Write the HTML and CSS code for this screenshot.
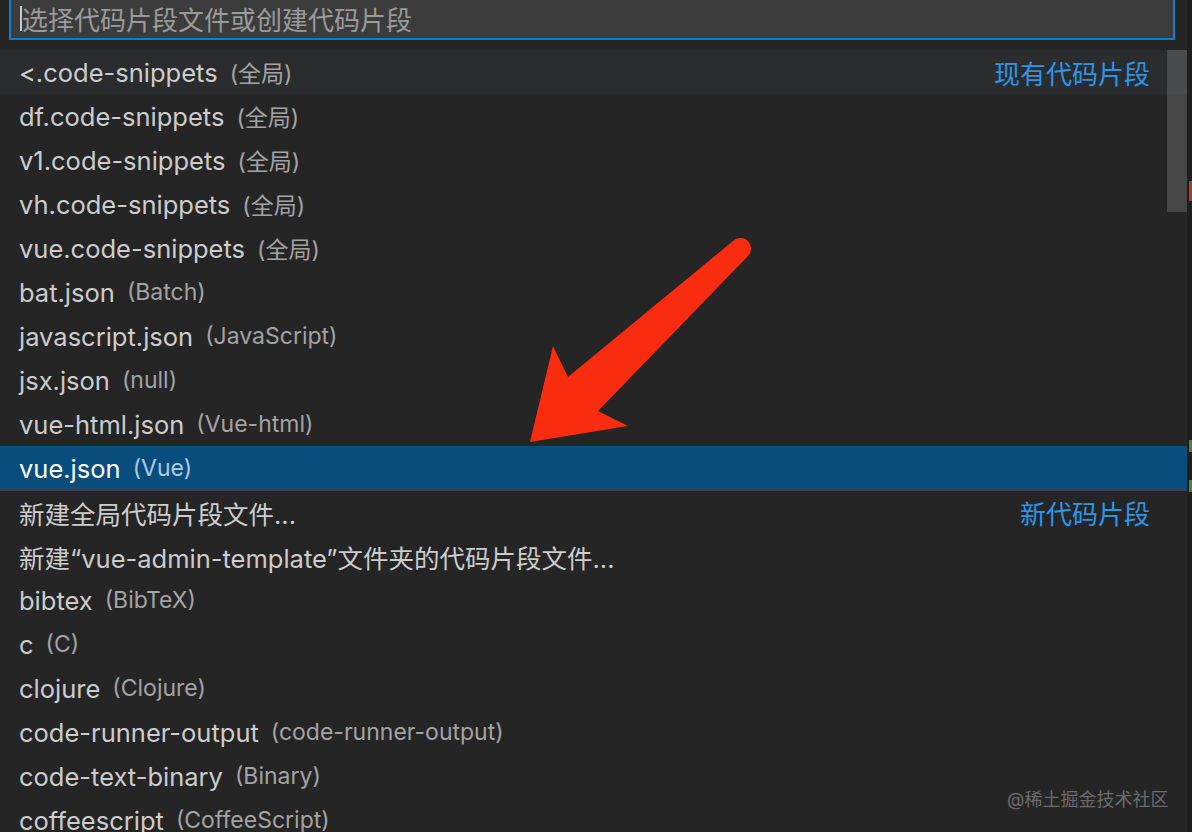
FILE: index.html
```html
<!DOCTYPE html>
<html lang="zh-CN">
<head>
    <meta charset="UTF-8">
    <title>Snippets</title>
    <link rel="stylesheet" href="styles.css">
</head>
<body>
    <div class="workbench">
        <div class="quick-pick">
            <div class="input-box">
                <span class="caret"></span>
                <span class="placeholder">选择代码片段文件或创建代码片段</span>
            </div>

            <div class="list">
                <div class="row focused">
                    <span class="label">&lt;.code-snippets</span><span class="desc">(全局)</span>
                    <span class="tag">现有代码片段</span>
                </div>
                <div class="row"><span class="label">df.code-snippets</span><span class="desc">(全局)</span></div>
                <div class="row"><span class="label">v1.code-snippets</span><span class="desc">(全局)</span></div>
                <div class="row"><span class="label">vh.code-snippets</span><span class="desc">(全局)</span></div>
                <div class="row"><span class="label">vue.code-snippets</span><span class="desc">(全局)</span></div>
                <div class="row"><span class="label">bat.json</span><span class="desc">(Batch)</span></div>
                <div class="row"><span class="label">javascript.json</span><span class="desc">(JavaScript)</span></div>
                <div class="row"><span class="label">jsx.json</span><span class="desc">(null)</span></div>
                <div class="row"><span class="label">vue-html.json</span><span class="desc">(Vue-html)</span></div>
                <div class="row selected"><span class="label">vue.json</span><span class="desc">(Vue)</span></div>
                <div class="row separator">
                    <span class="label">新建全局代码片段文件...</span>
                    <span class="tag">新代码片段</span>
                </div>
                <div class="row"><span class="label">新建“vue-admin-template”文件夹的代码片段文件...</span></div>
                <div class="row"><span class="label">bibtex</span><span class="desc">(BibTeX)</span></div>
                <div class="row"><span class="label">c</span><span class="desc">(C)</span></div>
                <div class="row"><span class="label">clojure</span><span class="desc">(Clojure)</span></div>
                <div class="row"><span class="label">code-runner-output</span><span class="desc">(code-runner-output)</span></div>
                <div class="row"><span class="label">code-text-binary</span><span class="desc">(Binary)</span></div>
                <div class="row"><span class="label">coffeescript</span><span class="desc">(CoffeeScript)</span></div>

                <div class="scrollbar"></div>
            </div>
        </div>

        <!-- editor edge behind the picker -->
        <div class="editor-edge">
            <span class="mark red"></span>
            <span class="mark green g1"></span>
            <span class="mark green g2"></span>
        </div>

        <!-- annotation arrow drawn over the screenshot -->
        <svg class="arrow" width="1192" height="832" viewBox="0 0 1192 832">
            <path d="M733 241 L568 377 L553 346 L530 442 L628 426 L598 411 L748 256 A10 10 0 0 0 733 241 Z" fill="#fa2c0f"/>
        </svg>

        <div class="watermark">@稀土掘金技术社区</div>
    </div>
</body>
</html>
```

FILE: styles.css
```css
body {
    margin: 0;
    background-color: #252526;
    font-family: Inter, "Noto Sans CJK SC", sans-serif;
    overflow: hidden;
}

.workbench {
    position: relative;
    display: flex;
    width: 1192px;
    height: 832px;
    overflow: hidden;
}

.quick-pick {
    width: 1187px;
    background-color: #252526;
}

.input-box {
    display: flex;
    align-items: center;
    height: 43px;
    margin: -3px 12px 0 9px;
    padding-left: 9px;
    background-color: #3c3c3c;
    border: 2px solid #0e7fd0;
    box-sizing: border-box;
}

.caret {
    width: 2px;
    height: 25px;
    background-color: #c8c8c8;
}

.placeholder {
    color: #9a9a9a;
    font-size: 26px;
}

.list {
    position: relative;
    margin-top: 10px;
}

.row {
    display: flex;
    align-items: center;
    height: 44px;
    padding: 0 37px 0 19px;
    color: #cccccc;
    white-space: nowrap;
}

.row.focused {
    background-color: #2b2c2d;
}

.row.selected {
    background-color: #094d7c;
    color: #ffffff;
}

.row.separator {
    box-shadow: inset 0 1px 0 #3d3d3e;
}

.label {
    font-size: 25.5px;
}

.desc {
    margin-left: 12px;
    font-size: 23px;
    color: #a3a3a3;
}

.selected .desc {
    color: #a9cbe6;
}

.tag {
    margin-left: auto;
    font-size: 26px;
    color: #2c95e8;
}

.scrollbar {
    position: absolute;
    top: 0;
    right: 0;
    width: 20px;
    height: 162px;
    background-color: rgba(121, 121, 121, 0.4);
}

.editor-edge {
    position: relative;
    flex: 1;
    background-color: #1e1e1e;
}

.mark {
    position: absolute;
    right: 0;
    width: 3px;
}

.mark.red {
    top: 181px;
    height: 20px;
    background-color: #b13a2e;
}

.mark.green {
    height: 12px;
    background-color: #587c3c;
}

.mark.g1 {
    top: 440px;
}

.mark.g2 {
    top: 480px;
}

.arrow {
    position: absolute;
    top: 0;
    left: 0;
}

.watermark {
    position: absolute;
    left: 1007px;
    top: 785px;
    font-size: 18px;
    color: #6b6b6b;
}
```
